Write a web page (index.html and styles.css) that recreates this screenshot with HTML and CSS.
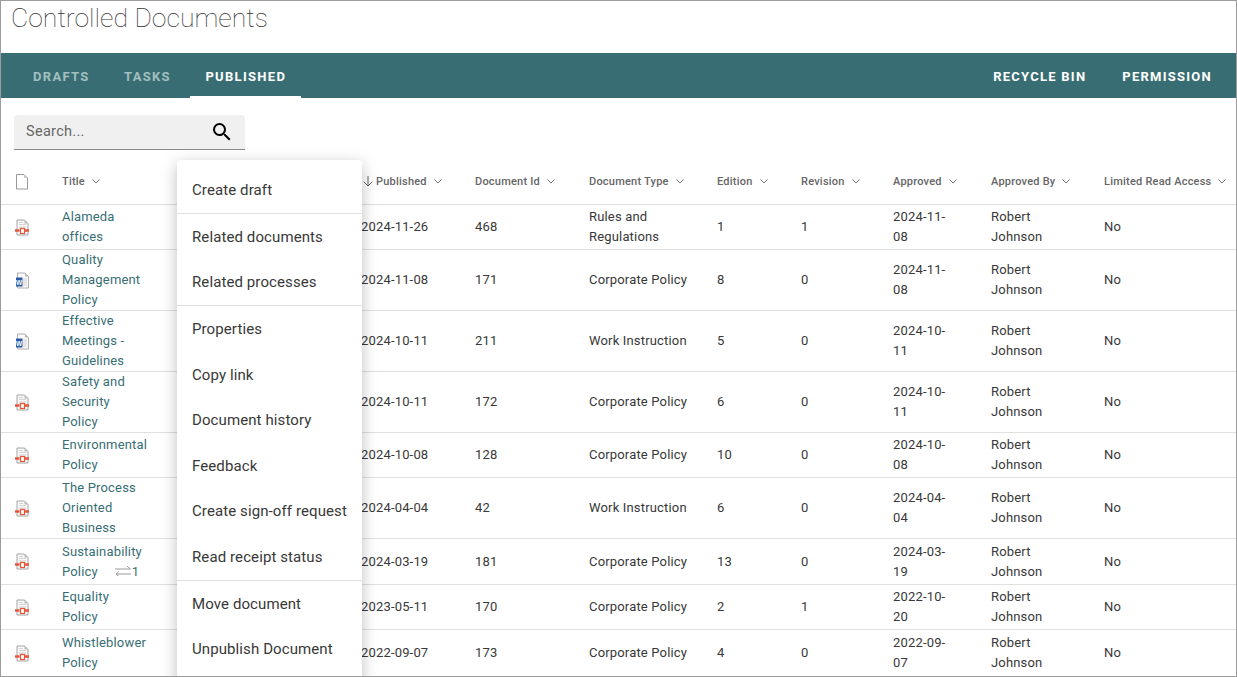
FILE: index.html
```html
<!DOCTYPE html>
<html lang="en">
<head>
    <meta charset="UTF-8">
    <meta name="viewport" content="width=device-width, initial-scale=1.0">
    <title>Controlled Documents</title>
    <link rel="stylesheet" href="styles.css">
</head>
<body>

    <!-- Shared icons -->
    <svg class="icon-defs" width="0" height="0">
        <symbol id="chevron" viewBox="0 0 8 5">
            <path d="M.5 .5L4 4 7.500 .5" fill="none" stroke="currentColor" stroke-width="1"/>
        </symbol>
        <symbol id="doc-blank" viewBox="0 0 14 17">
            <path d="M1.500 1.500h7.500l3.500 3.500v11H1.500z" fill="#fff" stroke="#999" stroke-width="1"/>
            <path d="M9 1.500v3.500h3.500z" fill="#ccc"/>
        </symbol>
        <symbol id="doc-pdf" viewBox="0 0 14 17">
            <path d="M2 1h7.500l3.500 3.500V16H2z" fill="#fafafa" stroke="#9a9a9a" stroke-width=".9"/>
            <path d="M9.500 1v3.500H13z" fill="#bbb"/>
            <path d="M4 3.500h4M4 5.500h7" stroke="#c8c8c8" stroke-width=".8"/>
            <rect x="4" y="7" width="7" height="3" fill="#e2e2e2"/>
            <rect x="5.500" y="9.500" width="4" height="5" fill="#fff" stroke="#e8553a" stroke-width="1.200"/>
            <path d="M0 11.500h4.500M10 11.500h4" stroke="#e8553a" stroke-width="2.400"/>
        </symbol>
        <symbol id="doc-word" viewBox="0 0 14 17">
            <path d="M2.500 1h7.500l3.500 3.500V16H2.500z" fill="#fafafa" stroke="#a5a5a5" stroke-width=".9"/>
            <path d="M10 1v3.500h3.500z" fill="#bbb"/>
            <path d="M8 7h4M8 9h4M8 11h4M8 13h4" stroke="#c8c8c8" stroke-width=".8"/>
            <rect x="1" y="5.500" width="6.500" height="9" fill="#2b5aa8"/>
            <text x="4.250" y="12.500" text-anchor="middle" class="word-mark">W</text>
        </symbol>
    </svg>

    <div class="page">
        <h1 class="page-title">Controlled Documents</h1>

        <!-- Tabs -->
        <div class="tabbar">
            <div class="tabs">
                <a class="tab">DRAFTS</a>
                <a class="tab">TASKS</a>
                <a class="tab active">PUBLISHED</a>
            </div>
            <div class="tab-actions">
                <a class="tab-action">RECYCLE BIN</a>
                <a class="tab-action">PERMISSION</a>
            </div>
        </div>

        <!-- Search -->
        <div class="search-row">
            <div class="search">
                <span class="search-text">Search...</span>
                <svg class="search-icon" viewBox="0 0 24 24"><path d="M15.500 14h-.79l-.28-.27A6.470 6.470 0 0 0 16 9.500 6.500 6.500 0 1 0 9.500 16c1.610 0 3.090-.59 4.230-1.570l.27.28v.79l5 4.990L20.490 19l-4.990-5zm-6 0C7.010 14 5 11.990 5 9.500S7.010 5 9.500 5 14 7.010 14 9.500 11.990 14 9.500 14z"/></svg>
            </div>
        </div>

        <!-- Documents -->
        <table class="doc-table">
            <colgroup>
                <col class="col-icon">
                <col class="col-title">
                <col class="col-hidden">
                <col class="col-published">
                <col class="col-id">
                <col class="col-type">
                <col class="col-edition">
                <col class="col-revision">
                <col class="col-approved">
                <col class="col-by">
                <col class="col-limited">
            </colgroup>
            <thead>
                <tr>
                    <th><svg class="doc-icon"><use href="#doc-blank"/></svg></th>
                    <th>Title<svg class="chev"><use href="#chevron"/></svg></th>
                    <th></th>
                    <th><svg class="sort-arrow" viewBox="0 0 10 11"><path d="M5 0v10M.7 5.700L5 10l4.300-4.300" fill="none" stroke="#666" stroke-width="1"/></svg>Published<svg class="chev"><use href="#chevron"/></svg></th>
                    <th>Document Id<svg class="chev"><use href="#chevron"/></svg></th>
                    <th>Document Type<svg class="chev"><use href="#chevron"/></svg></th>
                    <th>Edition<svg class="chev"><use href="#chevron"/></svg></th>
                    <th>Revision<svg class="chev"><use href="#chevron"/></svg></th>
                    <th>Approved<svg class="chev"><use href="#chevron"/></svg></th>
                    <th>Approved By<svg class="chev"><use href="#chevron"/></svg></th>
                    <th>Limited Read Access<svg class="chev"><use href="#chevron"/></svg></th>
                </tr>
            </thead>
            <tbody>
                <tr>
                    <td><svg class="doc-icon"><use href="#doc-pdf"/></svg></td>
                    <td><a class="doc-link">Alameda offices</a></td><td></td>
                    <td>2024-11-26</td><td>468</td><td>Rules and Regulations</td><td>1</td><td>1</td><td>2024-11-08</td><td>Robert Johnson</td><td>No</td>
                </tr>
                <tr>
                    <td><svg class="doc-icon"><use href="#doc-word"/></svg></td>
                    <td><a class="doc-link">Quality Management Policy</a></td><td></td>
                    <td>2024-11-08</td><td>171</td><td>Corporate Policy</td><td>8</td><td>0</td><td>2024-11-08</td><td>Robert Johnson</td><td>No</td>
                </tr>
                <tr>
                    <td><svg class="doc-icon"><use href="#doc-word"/></svg></td>
                    <td><a class="doc-link">Effective Meetings - Guidelines</a></td><td></td>
                    <td>2024-10-11</td><td>211</td><td>Work Instruction</td><td>5</td><td>0</td><td>2024-10-11</td><td>Robert Johnson</td><td>No</td>
                </tr>
                <tr>
                    <td><svg class="doc-icon"><use href="#doc-pdf"/></svg></td>
                    <td><a class="doc-link">Safety and Security Policy</a></td><td></td>
                    <td>2024-10-11</td><td>172</td><td>Corporate Policy</td><td>6</td><td>0</td><td>2024-10-11</td><td>Robert Johnson</td><td>No</td>
                </tr>
                <tr>
                    <td><svg class="doc-icon"><use href="#doc-pdf"/></svg></td>
                    <td><a class="doc-link">Environmental Policy</a></td><td></td>
                    <td>2024-10-08</td><td>128</td><td>Corporate Policy</td><td>10</td><td>0</td><td>2024-10-08</td><td>Robert Johnson</td><td>No</td>
                </tr>
                <tr>
                    <td><svg class="doc-icon"><use href="#doc-pdf"/></svg></td>
                    <td><a class="doc-link">The Process Oriented Business</a></td><td></td>
                    <td>2024-04-04</td><td>42</td><td>Work Instruction</td><td>6</td><td>0</td><td>2024-04-04</td><td>Robert Johnson</td><td>No</td>
                </tr>
                <tr class="row-tall">
                    <td><svg class="doc-icon"><use href="#doc-pdf"/></svg></td>
                    <td><a class="doc-link">Sustainability Policy</a><span class="links"><svg class="links-icon" viewBox="0 0 16 10"><path d="M0 3h15.500L12 0M16 8H1l3 2.500M1 8l3-2.500" fill="none" stroke="#9a9a9a" stroke-width="1"/></svg>1</span></td><td></td>
                    <td>2024-03-19</td><td>181</td><td>Corporate Policy</td><td>13</td><td>0</td><td>2024-03-19</td><td>Robert Johnson</td><td>No</td>
                </tr>
                <tr>
                    <td><svg class="doc-icon"><use href="#doc-pdf"/></svg></td>
                    <td><a class="doc-link">Equality Policy</a></td><td></td>
                    <td>2023-05-11</td><td>170</td><td>Corporate Policy</td><td>2</td><td>1</td><td>2022-10-20</td><td>Robert Johnson</td><td>No</td>
                </tr>
                <tr class="row-last">
                    <td><svg class="doc-icon"><use href="#doc-pdf"/></svg></td>
                    <td><a class="doc-link">Whistleblower Policy</a></td><td></td>
                    <td>2022-09-07</td><td>173</td><td>Corporate Policy</td><td>4</td><td>0</td><td>2022-09-07</td><td>Robert Johnson</td><td>No</td>
                </tr>
            </tbody>
        </table>

        <!-- Context menu -->
        <div class="context-menu">
            <div class="menu-item divided">Create draft</div>
            <div class="menu-item">Related documents</div>
            <div class="menu-item divided">Related processes</div>
            <div class="menu-item">Properties</div>
            <div class="menu-item">Copy link</div>
            <div class="menu-item">Document history</div>
            <div class="menu-item">Feedback</div>
            <div class="menu-item">Create sign-off request</div>
            <div class="menu-item divided">Read receipt status</div>
            <div class="menu-item">Move document</div>
            <div class="menu-item">Unpublish Document</div>
        </div>
    </div>

</body>
</html>
```

FILE: styles.css
```css
* {
    box-sizing: border-box;
}

html, body {
    margin: 0;
    height: 100%;
    overflow: hidden;
}

body {
    font-family: Roboto, "Liberation Sans", sans-serif;
    background-color: white;
    color: #383838;
}

.icon-defs {
    position: absolute;
}

.word-mark {
    font-family: "Liberation Sans", sans-serif;
    font-size: 6.500px;
    font-weight: bold;
    fill: white;
}

.page {
    position: relative;
    height: 677px;
    border: 1px solid #9c9c9c;
    overflow: hidden;
}

.page-title {
    margin: 0;
    height: 52px;
    padding-left: 10px;
    font-size: 26.600px;
    font-weight: 100;
    line-height: 33px;
    color: #333;
}

/* Tabs */
.tabbar {
    display: flex;
    justify-content: space-between;
    height: 45px;
    padding: 0 9px 0 17px;
    background-color: #386e73;
}

.tabs {
    display: flex;
    gap: 4.500px;
}

.tab-actions {
    display: flex;
    gap: 6px;
}

.tab, .tab-action {
    padding: 0 15px;
    font-size: 13px;
    font-weight: 700;
    line-height: 47px;
    letter-spacing: 1.250px;
    color: white;
}

.tab {
    letter-spacing: 1.300px;
    color: #a3bfc0;
}

.tab.active {
    color: white;
    border-bottom: 2px solid white;
}

/* Search */
.search-row {
    padding: 17px 13px 0;
    height: 61px;
}

.search {
    display: flex;
    justify-content: space-between;
    align-items: center;
    width: 231px;
    height: 35px;
    padding: 0 12px;
    background-color: #f0f0f0;
    border-bottom: 1px solid #8a8a8a;
    border-radius: 4px 4px 0 0;
}

.search-text {
    margin-top: -2px;
    font-size: 14.500px;
    letter-spacing: .3px;
    color: #666;
}

.search-icon {
    width: 24px;
    height: 24px;
    margin-right: -1px;
}

/* Table */
.doc-table {
    width: 1235px;
    table-layout: fixed;
    border-collapse: separate;
    border-spacing: 0;
    font-size: 13px;
    line-height: 20px;
    letter-spacing: .17px;
}

.col-icon { width: 61px; }
.col-title { width: 94px; }
.col-hidden { width: 205px; }
.col-published { width: 114px; }
.col-id { width: 114px; }
.col-type { width: 128px; }
.col-edition { width: 84px; }
.col-revision { width: 92px; }
.col-approved { width: 98px; }
.col-by { width: 113px; }
.col-limited { width: 132px; }

.doc-table tr {
    height: 45px;
}

.doc-table thead tr {
    height: 46px;
}

.doc-table .row-tall {
    height: 46px;
}

.doc-table .row-last {
    height: 47px;
}

.doc-table th, .doc-table td {
    padding: 0 12px 0 0;
    text-align: left;
    vertical-align: middle;
    border-bottom: 1px solid #e0e0e0;
}

.doc-table th {
    padding-right: 0;
    font-size: 11px;
    font-weight: 500;
    letter-spacing: .22px;
    color: #666;
    white-space: nowrap;
}

.doc-table th:first-child, .doc-table td:first-child {
    padding-left: 14px;
}

.doc-table td:nth-child(4) {
    padding-right: 0;
}

/* these two columns wrap their values in the original */
.doc-table td:nth-child(9) {
    padding-right: 34px;
}

.doc-table td:nth-child(10) {
    padding-right: 24px;
}

.doc-icon {
    display: block;
    width: 14px;
    height: 17px;
}

.chev {
    width: 8px;
    height: 5px;
    margin-left: 7px;
    color: #777;
    vertical-align: 1px;
}

.sort-arrow {
    width: 10px;
    height: 11px;
    margin: 0 3px 0 2px;
    vertical-align: -2px;
}

.doc-link {
    color: #386e73;
}

.links {
    margin-left: 17px;
    color: #386e73;
}

.links-icon {
    width: 16px;
    height: 10px;
    margin-right: 1px;
    vertical-align: 0;
}

/* Context menu */
.context-menu {
    position: absolute;
    top: 159px;
    left: 176px;
    width: 185px;
    padding: 7.500px 0 30px;
    background: white;
    border-radius: 4px;
    box-shadow: 0 4px 16px rgba(0, 0, 0, .25);
    font-size: 15px;
    letter-spacing: .1px;
    color: #383838;
}

.menu-item {
    height: 45.500px;
    padding-left: 15px;
    line-height: 45.500px;
}

.menu-item.divided {
    height: 46px;
    margin-bottom: 1px;
    border-bottom: 1px solid #e0e0e0;
}
```
